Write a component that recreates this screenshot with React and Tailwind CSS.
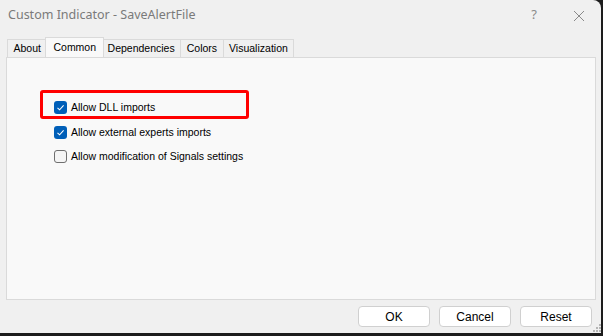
import React from "react";

const tabs = ["About", "Common", "Dependencies", "Colors", "Visualization"];

const options = [
  { label: "Allow DLL imports", checked: true, marked: true },
  { label: "Allow external experts imports", checked: true },
  { label: "Allow modification of Signals settings", checked: false },
];

function CheckBox({ checked }) {
  if (checked) {
    return (
      <span className="w-[13px] h-[13px] rounded-[3px] bg-[#005fb8] flex items-center justify-center shrink-0">
        <svg width="9" height="9" viewBox="0 0 9 9" fill="none">
          <path d="M1.5 4.8 L3.6 6.8 L7.6 2.4" stroke="#fff" strokeWidth="1.1" />
        </svg>
      </span>
    );
  }
  return <span className="w-[13px] h-[13px] rounded-[3px] border border-[#6f6f6f] bg-[#f5f5f5] shrink-0" />;
}

export default function App() {
  return (
    <div className="w-[603px] h-[336px] bg-[#1c1c1c] overflow-hidden" style={{ fontFamily: "'Liberation Sans', Arial, sans-serif" }}>
      <div className="w-[601px] h-[333px] bg-[#f0f0f0] rounded-tr-[8px] flex flex-col">
        {/* title bar */}
        <div className="h-[30px] flex items-center pl-[8px] pr-[16px]">
          <span className="text-[12.5px] text-[#7a7a7a]" style={{ fontFamily: "'Noto Sans', 'Open Sans', sans-serif" }}>
            Custom Indicator - SaveAlertFile
          </span>
          <span className="ml-auto text-[13px] text-[#8a8a8a] mr-[36px]" style={{ fontFamily: "'Noto Sans', sans-serif" }}>?</span>
          <svg width="12" height="12" viewBox="0 0 12 12" className="mt-[1px]">
            <path d="M1 1 L11 11 M11 1 L1 11" stroke="#8a8a8a" strokeWidth="1" />
          </svg>
        </div>

        {/* tabs */}
        <div className="h-[27px] flex items-end pl-[7px] text-[10.5px] text-black">
          {tabs.map((t) =>
            t === "Common" ? (
              <div key={t} className="h-[20px] px-[7px] -mx-[2px] relative z-10 bg-[#f9f9f9] border border-b-0 border-[#dadada] flex items-center">
                {t}
              </div>
            ) : (
              <div key={t} className="h-[18px] px-[5.5px] bg-[#f0f0f0] border border-b-0 border-l-0 first:border-l border-[#dadada] flex items-center">
                {t}
              </div>
            )
          )}
        </div>

        {/* panel */}
        <div className="mx-[6px] mr-[5px] h-[243px] bg-[#f9f9f9] border border-[#dadada] pt-[43px] pl-[47px]">
          <div className="flex flex-col gap-[11.5px] text-[10.5px] text-black">
            {options.map((o) => (
              <div key={o.label} className="relative h-[13px] flex items-center gap-[4px]">
                <CheckBox checked={o.checked} />
                <span className="leading-none">{o.label}</span>
                {o.marked && (
                  <div className="absolute left-[-14px] top-[-11px] w-[209px] h-[29px] border-[3px] border-[#ff0000] rounded-[3px]" />
                )}
              </div>
            ))}
          </div>
        </div>

        {/* buttons */}
        <div className="flex-1 flex items-start pt-[6px] pl-[358px] text-[12px] text-black">
          <div className="flex gap-[9px]">
            {["OK", "Cancel", "Reset"].map((b) => (
              <button key={b} className="w-[72px] h-[21px] shrink-0 bg-white border border-[#d0d0d0] rounded-[4px] flex items-center justify-center">
                {b}
              </button>
            ))}
          </div>
          <div className="self-end mb-[1px] ml-[1px] shrink-0 grid grid-cols-3 gap-[1px]">
            <span className="w-[2px] h-[2px]" />
            <span className="w-[2px] h-[2px]" />
            <span className="w-[2px] h-[2px] bg-[#b5b5b5]" />
            <span className="w-[2px] h-[2px]" />
            <span className="w-[2px] h-[2px] bg-[#b5b5b5]" />
            <span className="w-[2px] h-[2px] bg-[#b5b5b5]" />
            <span className="w-[2px] h-[2px] bg-[#b5b5b5]" />
            <span className="w-[2px] h-[2px] bg-[#b5b5b5]" />
            <span className="w-[2px] h-[2px] bg-[#b5b5b5]" />
          </div>
        </div>
      </div>
    </div>
  );
}
